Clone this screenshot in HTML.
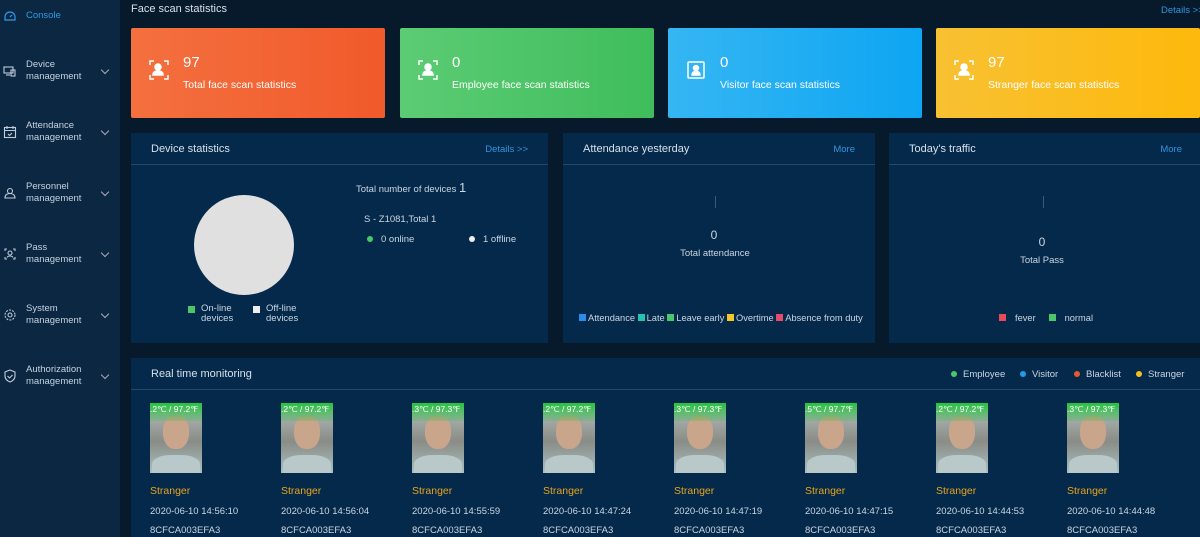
<!DOCTYPE html>
<html><head><meta charset="utf-8"><style>
*{margin:0;padding:0;box-sizing:border-box}
body{width:1200px;height:537px;overflow:hidden;background:#071a2c;font-family:"Liberation Sans",sans-serif;color:#c9d6e3;position:relative;font-size:10px}
.side{position:absolute;left:0;top:0;width:120px;height:537px;background:#0b2742}
.nav{position:absolute;left:0;width:120px;height:40px}
.nav svg{position:absolute;left:3px;top:50%;margin-top:-7px}
.nav .t{position:absolute;left:26px;top:50%;transform:translateY(-50%);line-height:12px;color:#c6d3e0;font-size:9.5px}
.nav .c{position:absolute;left:102px;top:50%;margin-top:-4px;width:6px;height:6px;border-right:1px solid #aab;border-bottom:1px solid #aab;transform:rotate(45deg)}
.abs{position:absolute;white-space:nowrap}
.card{position:absolute;top:28px;height:90px;border-radius:2px;color:#fff}
.card .n{position:absolute;left:52px;top:26px;font-size:15px}
.card .l{position:absolute;left:52px;top:51px;font-size:10.5px}
.card svg{position:absolute;left:18px;top:32px}
.panel{position:absolute;background:#05294a}
.ph{position:absolute;left:0;right:0;top:0;height:32px;border-bottom:1px solid #1d4a6e}
.ph .t{position:absolute;left:20px;top:10px;font-size:11px;color:#d6e0ea}
.ph .m{position:absolute;right:20px;top:11px;font-size:9.5px;color:#2f95e0}
.sq{display:inline-block;width:7px;height:7px;vertical-align:-0px;margin-right:2px}
.dot{display:inline-block;width:6px;height:6px;border-radius:50%;margin-right:8px}
.lg{position:absolute;top:11px;font-size:9.5px;white-space:nowrap}
.lg i{position:absolute;left:-12px;top:2px;width:6px;height:6px;border-radius:50%}
.mon{position:absolute;top:403px;width:120px}
.mon .img{width:52px;height:70px;background:linear-gradient(#b7c0bf,#8a8c86 55%,#a9c0c2);position:relative;overflow:hidden}
.mon .img .tp{position:absolute;left:0;top:0;width:52px;height:18px;background:linear-gradient(#25c23e,rgba(37,194,62,0.2));color:#fff;font-size:8.5px;line-height:12px;white-space:nowrap;overflow:hidden}
.mon .img .f{position:absolute;left:13px;top:12px;width:26px;height:34px;border-radius:45%;background:#c9a58c}
.mon .img .b{position:absolute;left:2px;top:52px;width:48px;height:22px;border-radius:40% 40% 0 0;background:#b9c8c9}
.mon .s{color:#e7a51d;font-size:10.5px;margin-top:12px}
.mon .d{font-size:9.5px;margin-top:9px;color:#c9d6e3}
.mon .i{font-size:9.5px;margin-top:8px;color:#c9d6e3}
</style></head><body>
<div class="side">
 <div class="nav" style="top:-4px"><svg width="14" height="14" viewBox="0 0 14 14" fill="none" stroke="#2e9be6" stroke-width="1.2"><path d="M2 11h10v-3a5 5 0 0 0-10 0z"/><path d="M7 8l2-2"/></svg><span class="t" style="color:#2e9be6">Console</span></div>
 <div class="nav" style="top:51px"><svg width="14" height="14" viewBox="0 0 14 14" fill="none" stroke="#c0ccd8" stroke-width="1.1"><rect x="1" y="3" width="9" height="6"/><rect x="8" y="6" width="4" height="6"/><path d="M3 11h4"/></svg><span class="t">Device<br>management</span><i class="c"></i></div>
 <div class="nav" style="top:112px"><svg width="14" height="14" viewBox="0 0 14 14" fill="none" stroke="#c0ccd8" stroke-width="1.1"><rect x="1.5" y="2.5" width="11" height="10"/><path d="M1.5 5.5h11M4 1v3M10 1v3M5 9l1.5 1.5L9 8"/></svg><span class="t">Attendance<br>management</span><i class="c"></i></div>
 <div class="nav" style="top:173px"><svg width="14" height="14" viewBox="0 0 14 14" fill="none" stroke="#c0ccd8" stroke-width="1.1"><circle cx="7" cy="5" r="2.5"/><path d="M2 12c0-3 2-4.5 5-4.5s5 1.5 5 4.5z"/></svg><span class="t">Personnel<br>management</span><i class="c"></i></div>
 <div class="nav" style="top:234px"><svg width="14" height="14" viewBox="0 0 14 14" fill="none" stroke="#c0ccd8" stroke-width="1.1"><path d="M2 4V2h2M10 2h2v2M12 10v2h-2M4 12H2v-2"/><circle cx="7" cy="6" r="2"/><path d="M4 10.5c1-2 5-2 6 0"/></svg><span class="t">Pass<br>management</span><i class="c"></i></div>
 <div class="nav" style="top:295px"><svg width="14" height="14" viewBox="0 0 14 14" fill="none" stroke="#c0ccd8" stroke-width="1.1"><circle cx="7" cy="7" r="2"/><circle cx="7" cy="7" r="5" stroke-dasharray="2 1.2"/></svg><span class="t">System<br>management</span><i class="c"></i></div>
 <div class="nav" style="top:356px"><svg width="14" height="14" viewBox="0 0 14 14" fill="none" stroke="#c0ccd8" stroke-width="1.1"><path d="M7 1l5 2v4c0 3-2.5 5-5 6-2.5-1-5-3-5-6V3z"/><path d="M4.5 7l2 2 3-3"/></svg><span class="t">Authorization<br>management</span><i class="c"></i></div>
</div>

<div class="abs" style="left:131px;top:3px;font-size:11px;color:#d6e0ea">Face scan statistics</div>
<div class="abs" style="left:1161px;top:5px;font-size:9.5px;color:#2f95e0">Details &gt;&gt;</div>

<div class="card" style="left:131px;width:254px;background:linear-gradient(90deg,#f4703f,#f15a2b)"><svg width="20" height="20" viewBox="0 0 20 20" fill="none" stroke="#fff" stroke-width="1.5"><path d="M1 5V1h4M15 1h4v4M19 15v4h-4M5 19H1v-4"/><circle cx="9" cy="7" r="3" fill="#fff"/><path d="M4 15c0-3 2-4 5-4s5 1 5 4z" fill="#fff"/></svg><div class="n">97</div><div class="l">Total face scan statistics</div></div>
<div class="card" style="left:400px;width:254px;background:linear-gradient(90deg,#5ccc74,#3fbd5c)"><svg width="20" height="20" viewBox="0 0 20 20" fill="none" stroke="#fff" stroke-width="1.5"><path d="M1 5V1h4M15 1h4v4M19 15v4h-4M5 19H1v-4"/><circle cx="10" cy="7" r="3" fill="#fff"/><path d="M5 15c0-3 2-4 5-4s5 1 5 4z" fill="#fff"/></svg><div class="n">0</div><div class="l">Employee face scan statistics</div></div>
<div class="card" style="left:668px;width:254px;background:linear-gradient(90deg,#35b6f3,#0ea5f2)"><svg width="20" height="20" viewBox="0 0 20 20" fill="none" stroke="#fff" stroke-width="1.5"><rect x="2" y="2" width="16" height="16" rx="1"/><circle cx="10" cy="8" r="2.5" fill="#fff"/><path d="M6 15c0-2.5 1.5-3.5 4-3.5s4 1 4 3.5z" fill="#fff"/></svg><div class="n">0</div><div class="l">Visitor face scan statistics</div></div>
<div class="card" style="left:936px;width:264px;background:linear-gradient(90deg,#f8c133,#fdb90c)"><svg width="20" height="20" viewBox="0 0 20 20" fill="none" stroke="#fff" stroke-width="1.5"><path d="M1 5V1h4M15 1h4v4M19 15v4h-4M5 19H1v-4"/><circle cx="10" cy="7" r="3" fill="#fff"/><path d="M5 15c0-3 2-4 5-4s5 1 5 4z" fill="#fff"/></svg><div class="n">97</div><div class="l">Stranger face scan statistics</div></div>

<div class="panel" style="left:131px;top:133px;width:417px;height:210px">
 <div class="ph"><span class="t">Device statistics</span><span class="m">Details &gt;&gt;</span></div>
 <div class="abs" style="left:63px;top:62px;width:100px;height:100px;border-radius:50%;background:#e0e0e0"></div>
 <div class="abs" style="left:57px;top:171px;line-height:10px;font-size:9.5px"><span class="sq" style="background:#4ac76b;position:absolute;left:0;top:2px"></span><span style="position:absolute;left:13px;white-space:nowrap">On-line<br>devices</span></div>
 <div class="abs" style="left:122px;top:171px;line-height:10px;font-size:9.5px"><span class="sq" style="background:#eee;position:absolute;left:0;top:2px"></span><span style="position:absolute;left:13px;white-space:nowrap">Off-line<br>devices</span></div>
 <div class="abs" style="left:225px;top:47px;font-size:9.5px">Total number of devices <span style="font-size:13px">1</span></div>
 <div class="abs" style="left:233px;top:81px;font-size:9.5px">S - Z1081,Total 1</div>
 <div class="abs" style="left:236px;top:101px;font-size:9.5px"><span class="dot" style="background:#4ac76b"></span>0 online</div>
 <div class="abs" style="left:338px;top:101px;font-size:9.5px"><span class="dot" style="background:#eee"></span>1 offline</div>
</div>

<div class="panel" style="left:563px;top:133px;width:312px;height:210px">
 <div class="ph"><span class="t">Attendance yesterday</span><span class="m">More</span></div>
 <div class="abs" style="left:152px;top:63px;width:1px;height:12px;background:#3a5a78"></div>
 <div class="abs" style="left:0;width:302px;top:95px;text-align:center;font-size:12px">0</div>
 <div class="abs" style="left:0;width:304px;top:115px;text-align:center;font-size:9.5px">Total attendance</div>
 <div class="abs" style="left:16px;top:180px;font-size:9.3px"><span class="sq" style="background:#2a8ee8"></span>Attendance <span class="sq" style="background:#26c2b0"></span>Late <span class="sq" style="background:#4ac76b"></span>Leave early <span class="sq" style="background:#f4c724"></span>Overtime <span class="sq" style="background:#e84a6a"></span>Absence from duty</div>
</div>

<div class="panel" style="left:889px;top:133px;width:311px;height:210px">
 <div class="ph"><span class="t">Today's traffic</span><span class="m" style="right:18px">More</span></div>
 <div class="abs" style="left:154px;top:63px;width:1px;height:12px;background:#3a5a78"></div>
 <div class="abs" style="left:0;width:306px;top:102px;text-align:center;font-size:12px">0</div>
 <div class="abs" style="left:0;width:306px;top:122px;text-align:center;font-size:9.5px">Total Pass</div>
 <div class="abs" style="left:110px;top:180px;font-size:9.3px"><span class="sq" style="background:#e84a5a;margin-right:9px"></span>fever &nbsp;&nbsp;&nbsp;&nbsp;<span class="sq" style="background:#4ac76b;margin-right:9px"></span>normal</div>
</div>

<div class="panel" style="left:131px;top:358px;width:1069px;height:179px">
 <div class="ph"><span class="t">Real time monitoring</span>
 <span class="lg" style="left:832px"><i style="background:#4ac76b"></i>Employee</span>
 <span class="lg" style="left:901px"><i style="background:#1e9de8"></i>Visitor</span>
 <span class="lg" style="left:955px"><i style="background:#e8562e"></i>Blacklist</span>
 <span class="lg" style="left:1017px"><i style="background:#f4c021"></i>Stranger</span>
 </div>
</div>

<div class="mon" style="left:150px"><div class="img"><div class="f"></div><div class="b"></div><div class="tp">.2℃ / 97.2℉</div></div><div class="s">Stranger</div><div class="d">2020-06-10 14:56:10</div><div class="i">8CFCA003EFA3</div></div>
<div class="mon" style="left:281px"><div class="img"><div class="f"></div><div class="b"></div><div class="tp">.2℃ / 97.2℉</div></div><div class="s">Stranger</div><div class="d">2020-06-10 14:56:04</div><div class="i">8CFCA003EFA3</div></div>
<div class="mon" style="left:412px"><div class="img"><div class="f"></div><div class="b"></div><div class="tp">.3℃ / 97.3℉</div></div><div class="s">Stranger</div><div class="d">2020-06-10 14:55:59</div><div class="i">8CFCA003EFA3</div></div>
<div class="mon" style="left:543px"><div class="img"><div class="f"></div><div class="b"></div><div class="tp">.2℃ / 97.2℉</div></div><div class="s">Stranger</div><div class="d">2020-06-10 14:47:24</div><div class="i">8CFCA003EFA3</div></div>
<div class="mon" style="left:674px"><div class="img"><div class="f"></div><div class="b"></div><div class="tp">.3℃ / 97.3℉</div></div><div class="s">Stranger</div><div class="d">2020-06-10 14:47:19</div><div class="i">8CFCA003EFA3</div></div>
<div class="mon" style="left:805px"><div class="img"><div class="f"></div><div class="b"></div><div class="tp">.5℃ / 97.7℉</div></div><div class="s">Stranger</div><div class="d">2020-06-10 14:47:15</div><div class="i">8CFCA003EFA3</div></div>
<div class="mon" style="left:936px"><div class="img"><div class="f"></div><div class="b"></div><div class="tp">.2℃ / 97.2℉</div></div><div class="s">Stranger</div><div class="d">2020-06-10 14:44:53</div><div class="i">8CFCA003EFA3</div></div>
<div class="mon" style="left:1067px"><div class="img"><div class="f"></div><div class="b"></div><div class="tp">.3℃ / 97.3℉</div></div><div class="s">Stranger</div><div class="d">2020-06-10 14:44:48</div><div class="i">8CFCA003EFA3</div></div>
</body></html>
